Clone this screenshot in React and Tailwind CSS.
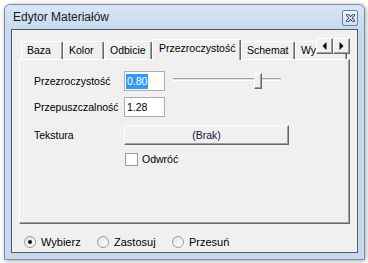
import React from "react";

const tabs = [
  { label: "Baza", w: 42 },
  { label: "Kolor", w: 41 },
  { label: "Odbicie", w: 48 },
  { label: "Przezroczystość", w: 89, selected: true },
  { label: "Schemat", w: 54 },
  { label: "Wyświetlanie", w: 52 },
];

const CloseButton = () => (
  <div className="w-[16px] h-[16px] mt-[1px] rounded-[2px] border border-[#6f829c] bg-gradient-to-b from-[#eef3fa] to-[#d3dfee] flex items-center justify-center">
    <svg width="9" height="8" viewBox="0 0 9 8">
      <path d="M1.5 1.2 L7.5 6.8 M7.5 1.2 L1.5 6.8" stroke="#3b4a5e" strokeWidth="3" strokeLinecap="square" />
      <path d="M1.5 1.2 L7.5 6.8 M7.5 1.2 L1.5 6.8" stroke="#ffffff" strokeWidth="1.1" strokeLinecap="square" />
    </svg>
  </div>
);

const Tab = ({ label, w, selected }) => (
  <div
    style={{ width: w }}
    className={
      selected
        ? "relative z-10 shrink-0 h-[21px] -mb-[1px] bg-[#f0f0f0] border-t border-l border-r border-t-white border-l-white border-r-[#696969] rounded-t-[2px] shadow-[inset_-1px_0_0_#a0a0a0] flex items-start pt-[3px] pl-[6px] overflow-hidden whitespace-nowrap"
        : "shrink-0 h-[18px] border-t border-l border-r border-t-white border-l-white border-r-[#696969] rounded-t-[2px] shadow-[inset_-1px_0_0_#a0a0a0] flex items-center pl-[5px] overflow-hidden whitespace-nowrap"
    }
  >
    {label}
  </div>
);

const ArrowButton = ({ dir }) => (
  <div className="w-[17px] h-[16px] bg-[#f0f0f0] border border-t-white border-l-white border-r-[#696969] border-b-[#696969] shadow-[inset_-1px_-1px_0_#a0a0a0] flex items-center justify-center">
    <svg width="5" height="8" viewBox="0 0 5 8">
      {dir === "left" ? <path d="M4.5 0 L0.5 4 L4.5 8 Z" fill="#000" /> : <path d="M0.5 0 L4.5 4 L0.5 8 Z" fill="#000" />}
    </svg>
  </div>
);

const Radio = ({ label, checked, w }) => (
  <div style={{ width: w }} className="flex items-center">
    <div className="w-[12px] h-[12px] rounded-full border border-[#9a9a9a] bg-gradient-to-br from-[#e2e2e2] to-white flex items-center justify-center">
      {checked && <div className="w-[4px] h-[4px] rounded-full bg-[#111]" />}
    </div>
    <span className="ml-[5px] text-[11px]">{label}</span>
  </div>
);

const App = () => {
  return (
    <div className="w-[368px] h-[263px] bg-white pl-[4px] pt-[4px] font-['Liberation_Sans',Arial,sans-serif] text-[10.5px] leading-none text-black">
      <div className="w-[361px] h-[256px] border border-[#7c8ea8] rounded-t-[6px] bg-[#c8d9ef] flex flex-col shadow-[1px_1px_5px_rgba(0,0,0,0.35)]">
        {/* Title bar */}
        <div className="h-[24px] flex items-center justify-between pl-[8px] pr-[6px] rounded-t-[6px] bg-gradient-to-b from-[#d9e6f6] to-[#c8d9ef]">
          <span className="text-[12px] text-[#1b1b1b]">Edytor Materiałów</span>
          <CloseButton />
        </div>

        {/* Client area */}
        <div className="mx-[6px] h-[224px] border border-[#555b63] bg-[#f0f0f0] flex flex-col">
          <div className="ml-[7px] mt-[9px] w-[331px]">
            {/* Tab strip */}
            <div className="relative h-[20px] flex items-end pl-[2px]">
              {tabs.map((t) => (
                <Tab key={t.label} {...t} />
              ))}
              <div className="absolute right-0 top-[-1px] z-20 flex">
                <ArrowButton dir="left" />
                <ArrowButton dir="right" />
              </div>
            </div>

            {/* Panel */}
            <div className="h-[165px] border border-t-white border-l-white border-r-[#696969] border-b-[#696969] shadow-[inset_-1px_-1px_0_#a0a0a0] pl-[14px] pt-[11px] flex flex-col">
              <div className="flex items-center h-[20px]">
                <span className="w-[90px]">Przezroczystość</span>
                <div className="w-[41px] h-[20px] border border-[#abadb3] bg-white flex items-center pl-[1px]">
                  <span className="bg-[#3399ff] text-white h-[15px] px-[1px] flex items-center">0.80</span>
                </div>
                <div className="relative ml-[8px] w-[108px] h-[20px]">
                  <div className="absolute left-0 right-0 top-[7px] h-[3px] border-t border-t-[#a0a0a0] border-b border-b-white bg-[#e3e3e3]" />
                  <div className="absolute left-[81px] top-[2px] w-[8px] h-[16px] bg-[#f0f0f0] border border-t-white border-l-white border-r-[#696969] border-b-[#696969] shadow-[inset_-1px_-1px_0_#a0a0a0]" />
                </div>
              </div>

              <div className="flex items-center h-[20px] mt-[6px]">
                <span className="w-[90px]">Przepuszczalność</span>
                <div className="w-[41px] h-[20px] border border-[#abadb3] bg-white flex items-center pl-[2px]">
                  1.28
                </div>
              </div>

              <div className="flex items-center h-[20px] mt-[8px]">
                <span className="w-[90px]">Tekstura</span>
                <div className="w-[165px] h-[20px] bg-[#f0f0f0] border border-t-white border-l-white border-r-[#696969] border-b-[#696969] shadow-[inset_-1px_-1px_0_#a0a0a0] flex items-center justify-center text-[#10103a]">
                  (Brak)
                </div>
              </div>

              <div className="flex items-center h-[13px] mt-[8px] pl-[91px]">
                <div className="w-[13px] h-[13px] border border-[#9a9a9a] bg-white" />
                <span className="ml-[4px]">Odwróć</span>
              </div>
            </div>
          </div>

          {/* Mode radios */}
          <div className="flex items-center h-[14px] mt-[11px] pl-[12px]">
            <Radio label="Wybierz" checked w={73} />
            <Radio label="Zastosuj" w={75} />
            <Radio label="Przesuń" w={80} />
          </div>
        </div>
      </div>
    </div>
  );
};

export default App;
